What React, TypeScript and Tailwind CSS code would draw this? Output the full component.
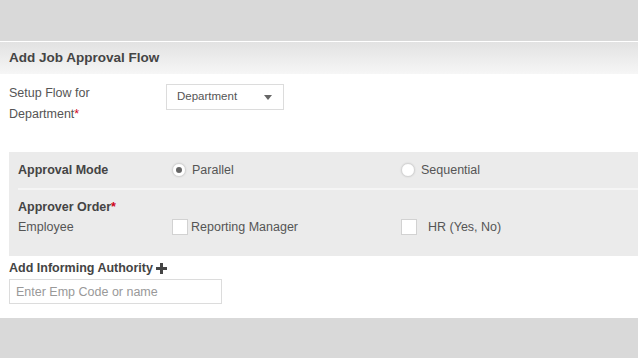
/**
 * Add Job Approval Flow form panel.
 */

const font = { fontFamily: '"Liberation Sans", Arial, sans-serif' };

function Radio({ checked, label }: { checked?: boolean; label: string }) {
  return (
    <label className="flex items-center gap-[6px] text-[12.5px] text-[#555]">
      <span className="flex h-[14px] w-[14px] items-center justify-center rounded-full border border-[#d4d4d4] bg-white shadow-[0_0_2px_rgba(0,0,0,0.12)]">
        {checked && <span className="h-[6px] w-[6px] rounded-full bg-[#666]" />}
      </span>
      {label}
    </label>
  );
}

function Checkbox({ label, gap }: { label: string; gap: string }) {
  return (
    <label className={`flex items-center ${gap} text-[12.5px] text-[#555]`}>
      <span className="h-[16px] w-[16px] border border-[#d2d2d2] bg-white" />
      {label}
    </label>
  );
}

export default function App() {
  return (
    <div className="flex h-[358px] w-full flex-col bg-[#d9d9d9]" style={font}>
      {/* Top band */}
      <div className="h-[41px] shrink-0" />

      {/* Header */}
      <div className="flex h-[33px] shrink-0 items-center border-t border-white bg-gradient-to-b from-[#e2e2e2] to-[#f6f6f6] px-[9px]">
        <h2 className="text-[13.5px] font-bold text-[#444]">Add Job Approval Flow</h2>
      </div>

      {/* Body */}
      <div className="h-[244px] shrink-0 bg-white">
        {/* Setup flow */}
        <div className="flex pl-[9px] pt-[9px]">
          <div className="w-[157px] text-[12.5px] leading-[21px] text-[#555]">
            Setup Flow for
            <br />
            Department<span className="text-[#d0021b]">*</span>
          </div>
          <div className="mt-[1px] flex h-[26px] w-[118px] items-center justify-between border border-[#dcdcdc] pl-[10px] pr-[11px] text-[11.5px] text-[#555]">
            Department
            <svg width="8" height="5" viewBox="0 0 8 5">
              <path d="M0 0h8L4 5z" fill="#666" />
            </svg>
          </div>
        </div>

        {/* Approval settings */}
        <div className="ml-[9px] mt-[27px] bg-[#ebebeb] pl-[9px]">
          <div className="flex h-[38px] items-center border-b-2 border-[#f5f5f5]">
            <div className="w-[154px] text-[12.5px] font-bold text-[#444]">Approval Mode</div>
            <div className="w-[229px]">
              <Radio checked label="Parallel" />
            </div>
            <Radio label="Sequential" />
          </div>
          <div className="flex h-[66px] flex-col pt-[7px]">
            <div className="text-[12.5px] font-bold leading-[20px] text-[#444]">
              Approver Order<span className="text-[#d0021b]">*</span>
            </div>
            <div className="flex items-center">
              <div className="w-[154px] text-[12.5px] leading-[20px] text-[#555]">Employee</div>
              <div className="w-[229px]">
                <Checkbox label="Reporting Manager" gap="gap-[3px]" />
              </div>
              <Checkbox label="HR (Yes, No)" gap="gap-[11px]" />
            </div>
          </div>
        </div>

        {/* Informing authority */}
        <div className="pl-[9px] pt-[3px]">
          <div className="flex items-center gap-[3px] text-[12.5px] font-bold leading-[18px] text-[#444]">
            Add Informing Authority
            <svg width="11" height="11" viewBox="0 0 11 11">
              <path d="M4 0h3v4h4v3H7v4H4V7H0V4h4z" fill="#444" />
            </svg>
          </div>
          <input
            className="mt-[2px] h-[25px] w-[213px] border border-[#dcdcdc] px-[6px] text-[12.5px] text-[#555] outline-none placeholder:text-[#999]"
            placeholder="Enter Emp Code or name"
          />
        </div>
      </div>

      <div className="flex-1" />
    </div>
  );
}
